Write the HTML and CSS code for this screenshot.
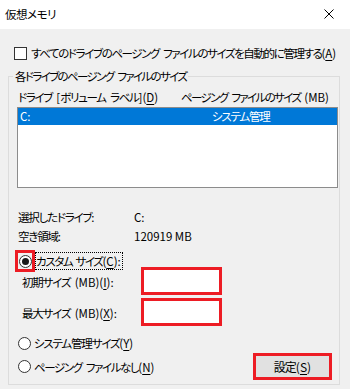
FILE: index.html
```html
<!DOCTYPE html>
<html lang="ja">
<head>
    <meta charset="UTF-8">
    <meta name="viewport" content="width=device-width, initial-scale=1.0">
    <title>仮想メモリ</title>
    <link rel="stylesheet" href="styles.css">
</head>
<body>
    <!-- Barra del titolo -->
    <div class="titlebar">
        <span class="title">仮想メモリ</span>
        <svg class="close" width="10" height="10" viewBox="0 0 10 10">
            <path d="M0.5 0.5L9.5 9.5M9.5 0.5L0.5 9.5" stroke="#000" stroke-width="1" fill="none"/>
        </svg>
    </div>

    <!-- Gestione automatica -->
    <div class="auto-row">
        <span class="checkbox"></span>
        <span class="tight">すべてのドライブのページング ファイルのサイズを自動的に管理する<span class="lat">(<u>A</u>)</span></span>
    </div>

    <fieldset class="group">
        <legend>各ドライブのページング ファイルのサイズ</legend>

        <div class="list-head">
            <span class="col-drive">ドライブ <span class="lat">[</span>ボリューム ラベル<span class="lat">](<u>D</u>)</span></span>
            <span class="col-size">ページング ファイルのサイズ <span class="lat">(MB)</span></span>
        </div>
        <div class="listbox">
            <div class="list-row selected">
                <span class="col-drive lat">C:</span>
                <span class="col-size">システム管理</span>
            </div>
        </div>

        <div class="info">
            <div class="info-row"><span class="info-label">選択したドライブ<span class="lat">:</span></span><span class="lat">C:</span></div>
            <div class="info-row"><span class="info-label">空き領域<span class="lat">:</span></span><span class="lat">120919 MB</span></div>
        </div>

        <div class="custom-row">
            <span class="mark"><span class="radio checked"></span></span>
            <span class="focus">カスタム サイズ<span class="lat">(<u>C</u>):</span></span>
        </div>

        <div class="sizes">
            <div class="size-row">
                <span class="size-label">初期サイズ <span class="lat">(MB)(<u>I</u>):</span></span>
                <input class="size-input" type="text">
            </div>
            <div class="size-row">
                <span class="size-label">最大サイズ <span class="lat">(MB)(<u>X</u>):</span></span>
                <input class="size-input" type="text">
            </div>
        </div>

        <div class="radio-row system-row">
            <span class="radio"></span>
            <span>システム管理サイズ<span class="lat">(<u>Y</u>)</span></span>
        </div>
        <div class="bottom-row">
            <div class="radio-row">
                <span class="radio"></span>
                <span class="tight">ページング ファイルなし<span class="lat">(<u>N</u>)</span></span>
            </div>
            <button class="set-btn">設定<span class="lat">(<u>S</u>)</span></button>
        </div>
    </fieldset>
</body>
</html>
```

FILE: styles.css
```css
/* Stile generale della finestra */
body {
    margin: 0;
    width: 350px;
    height: 389px;
    overflow: hidden;
    background-color: #f0f0f0;
    color: #000;
    font-family: "Noto Sans CJK JP", "Noto Sans", sans-serif;
    font-size: 11.5px;
    line-height: 16px;
    letter-spacing: -1.2px; /* i kana di Yu Gothic UI sono stretti */
    word-spacing: 3px;
    white-space: nowrap;
    font-feature-settings: "palt";
}
u {
    text-decoration-thickness: 1px;
    text-underline-offset: 2px;
}
.lat {
    letter-spacing: 0;
    word-spacing: 0;
}
.tight {
    letter-spacing: -1.4px;
}
.titlebar {
    height: 29px;
    background-color: #fff;
    display: flex;
    align-items: center;
    justify-content: space-between;
    padding: 0 16px 2px 5px;
    box-sizing: border-box;
}
.title {
    letter-spacing: -0.5px;
}
.auto-row {
    display: flex;
    align-items: center;
    gap: 4px;
    height: 16px;
    margin: 16px 0 0 14px;
}
.checkbox {
    flex: none;
    width: 13px;
    height: 13px;
    box-sizing: border-box;
    border: 1px solid #333;
    background-color: #fff;
}
/* Riquadro del gruppo */
.group {
    margin: 7px 0 0 8px;
    width: 332px;
    min-width: 0;
    box-sizing: border-box;
    border: 1px solid #dcdcdc;
    padding: 5px 1px 4px 8px;
}
.group legend {
    padding: 0 2px;
    margin-left: -4px;
    line-height: 16px;
    letter-spacing: -1.65px;
}
.list-head {
    display: flex;
    height: 16px;
}
.list-head .col-drive {
    width: 163px;
    padding-left: 1px;
    letter-spacing: -1.3px;
}
.list-head .col-size {
    letter-spacing: -1.65px;
}
.listbox {
    margin-top: 2px;
    height: 81px;
    box-sizing: border-box;
    border: 1px solid #8c8c8c;
    background-color: #fff;
}
.list-row {
    display: flex;
    height: 17px;
    line-height: 17px;
    padding-left: 2px;
}
.list-row .col-drive {
    width: 192px;
}
.list-row.selected {
    background-color: #0078d7;
    color: #fff;
}
.info {
    margin-top: 20px;
}
.info-row {
    display: flex;
    height: 19px;
    line-height: 19px;
    padding-left: 1px;
}
.info-label {
    width: 116px;
}
/* Opzioni */
.custom-row {
    display: flex;
    align-items: center;
    height: 22px;
    margin: 4px 0 0 -2px;
}
.mark {
    width: 20px;
    height: 22px;
    box-sizing: border-box;
    border: 3px solid #ed1c24;
    display: flex;
    align-items: center;
    justify-content: center;
}
.focus {
    border: 1px dotted #000;
    padding-right: 1px;
    letter-spacing: -1.4px;
    word-spacing: 2px;
}
.radio {
    flex: none;
    width: 13px;
    height: 13px;
    box-sizing: border-box;
    border: 1px solid #333;
    border-radius: 50%;
    background-color: #fff;
    display: flex;
    align-items: center;
    justify-content: center;
}
.radio.checked::after {
    content: "";
    width: 7px;
    height: 7px;
    border-radius: 50%;
    background-color: #1a1a1a;
}
.sizes {
    margin-top: -5px;
    display: flex;
    flex-direction: column;
    gap: 3px;
}
.size-row {
    display: flex;
    align-items: center;
    height: 28px;
}
.size-label {
    width: 119px;
    padding: 2px 0 0 5px;
}
.size-input {
    width: 81px;
    height: 28px;
    box-sizing: border-box;
    border: 3px solid #ed1c24;
    background-color: #fff;
    margin: 0;
    padding: 0;
}
.radio-row {
    display: flex;
    align-items: center;
    gap: 3px;
    padding-left: 1px;
}
.system-row {
    height: 20px;
    margin-top: 7px;
}
.bottom-row {
    display: flex;
    align-items: center;
    justify-content: space-between;
    height: 27px;
}
.set-btn {
    width: 79px;
    height: 27px;
    margin-right: 6px;
    box-sizing: border-box;
    border: 3px solid #ed1c24;
    background-color: #e1e1e1;
    font-family: inherit;
    font-size: 12px;
    letter-spacing: -1px;
    font-feature-settings: "palt";
    color: #000;
    padding: 0;
}
```
